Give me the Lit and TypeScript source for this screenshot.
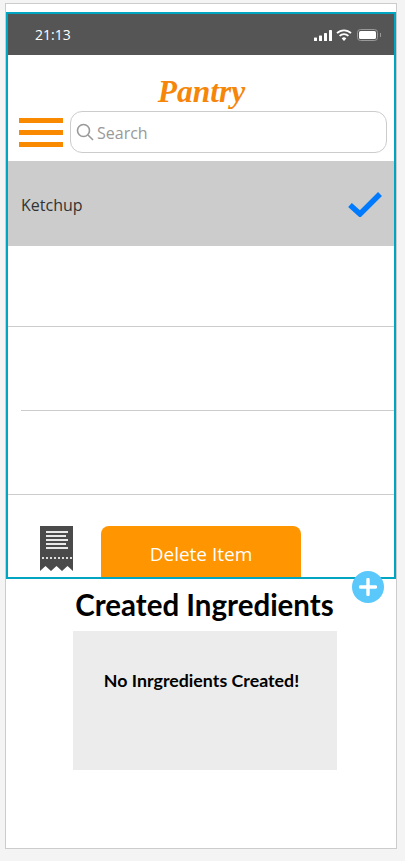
import { LitElement, html, css } from "lit";
import { customElement } from "lit/decorators.js";

@customElement("app-root")
export class AppRoot extends LitElement {
  static styles = css`
    :host { display: block; width: 405px; height: 861px; background: #f4f4f4; overflow: hidden; font-family: "Open Sans", sans-serif; }
    .page { padding: 3px 8px 0 5px; }
    .card { position: relative; height: 846px; box-sizing: border-box; background: #fff; border: 1px solid #ccc; padding-top: 8px; }
    .phone { box-sizing: border-box; height: 567px; border: 2px solid #00a5c2; display: flex; flex-direction: column; overflow: hidden; background: #fff; }
    .status { height: 41px; flex: none; background: #555; color: #fff; display: flex; align-items: center; justify-content: space-between; padding: 0 13px 0 27px; font-size: 14px; }
    .status-icons { display: flex; align-items: center; gap: 4px; padding-top: 1px; }
    .top { height: 106px; flex: none; display: flex; flex-direction: column; box-sizing: border-box; padding-top: 17px; }
    .title { text-align: center; font: italic bold 31.500px/40px "Liberation Serif", serif; color: #f5860a; height: 39px; padding-left: 1px; }
    .search-row { display: flex; align-items: center; padding: 0 7px 0 11px; gap: 7px; }
    .burger { width: 44px; height: 29px; display: flex; flex-direction: column; justify-content: space-between; flex: none; }
    .burger span { display: block; height: 5px; background: #f98a00; }
    .search { flex: 1; height: 42px; box-sizing: border-box; border: 1px solid #ccc; border-radius: 12px; display: flex; align-items: center; gap: 3px; padding-left: 5px; color: #999; font-size: 16px; }
    .search span { padding-top: 2px; }
    .row { box-sizing: border-box; flex: none; display: flex; align-items: center; justify-content: space-between; padding: 0 12px 0 13px; color: #333; font-size: 16px; }
    .selected { height: 85px; background: #ccc; }
    .selected span { padding-top: 2px; }
    .line { height: 81px; border-bottom: 1px solid #ccc; }
    .line2 { height: 84px; }
    .inset-line { margin-left: 13px; height: 84px; box-sizing: border-box; border-bottom: 1px solid #ccc; flex: none; }
    .actions { display: flex; align-items: flex-start; padding: 31px 0 0 32px; gap: 28px; flex: none; }
    .receipt { display: block; flex: none; }
    .delete { width: 200px; height: 60px; background: #ff9500; border-radius: 8px; color: #fff; font-size: 19px; display: flex; justify-content: center; padding-top: 15px; box-sizing: border-box; }
    .badge { position: absolute; left: 346px; top: 567px; width: 32px; height: 32px; border-radius: 50%; background: #5ac8fa; display: flex; align-items: center; justify-content: center; }
    .ingredients { display: flex; flex-direction: column; align-items: center; padding-left: 8px; }
    h2 { margin: 0 1px 0 0; height: 52px; font: bold 29.500px/51px "Lato", sans-serif; color: #000; text-align: center; }
    .empty { width: 264px; height: 139px; background: #ececec; box-sizing: border-box; padding: 38px 7px 0 0; text-align: center; font: bold 17.800px/22px "Lato", sans-serif; color: #000; }
  `;

  render() {
    return html`<div class="page"><div class="card">
      <div class="phone">
        <div class="status">
          <span>21:13</span>
          <span class="status-icons">
            <svg width="18" height="11" viewBox="0 0 18 11"><g fill="#fff"><rect x="0" y="7.500" width="3" height="3.500" rx=".6"/><rect x="5" y="5.500" width="3" height="5.500" rx=".6"/><rect x="10" y="3" width="3" height="8" rx=".6"/><rect x="15" y="0" width="3" height="11" rx=".6"/></g></svg>
            <svg width="16" height="12" viewBox="0 0 16 12"><g fill="none" stroke="#fff" stroke-width="1.8"><path d="M1 4.200a10 10 0 0 1 14 0"/><path d="M3.600 6.900a6.200 6.200 0 0 1 8.800 0"/></g><path d="M8 12 5.700 9.400a3.200 3.200 0 0 1 4.600 0z" fill="#fff"/></svg>
            <svg width="24" height="12" viewBox="0 0 24 12" style="margin-left:1px"><rect x=".5" y=".5" width="20" height="11" rx="3" fill="none" stroke="#999"/><rect x="2" y="2" width="17" height="8" rx="1.600" fill="#fff"/><rect x="23" y="4" width="1" height="4" fill="#999"/></svg>
          </span>
        </div>
        <div class="top">
          <div class="title">Pantry</div>
          <div class="search-row">
            <div class="burger"><span></span><span></span><span></span></div>
            <div class="search">
              <svg width="18" height="18" viewBox="0 0 18 18" fill="none" stroke="#999" stroke-width="1.6"><circle cx="7.500" cy="7.500" r="6"/><path d="M12 12l5 5"/></svg>
              <span>Search</span>
            </div>
          </div>
        </div>
        <div class="row selected">
          <span>Ketchup</span>
          <svg width="34" height="26" viewBox="0 0 34 26" fill="none" stroke="#007aff" stroke-width="5.500"><path d="M2 14l10 9L32 3"/></svg>
        </div>
        <div class="row line"></div>
        <div class="inset-line"></div>
        <div class="row line line2"></div>
        <div class="actions">
          <svg class="receipt" width="33" height="45" viewBox="0 0 33 45">
            <path d="M0 0h33v45l-5.500-5-5.500 5-5.500-5-5.500 5-5.500-5L0 45z" fill="#4a4a4a"/>
            <g fill="#e8e8e8"><rect x="6" y="5" width="22" height="2"/><rect x="6" y="9" width="20" height="2"/><rect x="6" y="13" width="22" height="2"/><rect x="6" y="17" width="20" height="2"/><rect x="6" y="21" width="22" height="2"/></g>
            <g fill="#ddd"><rect x="2" y="31" width="2" height="2"/><rect x="6" y="31" width="2" height="2"/><rect x="10" y="31" width="2" height="2"/><rect x="14" y="31" width="2" height="2"/><rect x="18" y="31" width="2" height="2"/><rect x="22" y="31" width="2" height="2"/><rect x="26" y="31" width="2" height="2"/><rect x="30" y="31" width="2" height="2"/></g>
          </svg>
          <div class="delete">Delete Item</div>
        </div>
      </div>
      <div class="ingredients">
        <h2>Created Ingredients</h2>
        <div class="empty">No Inrgredients Created!</div>
      </div>
      <div class="badge"><svg width="18" height="18" viewBox="0 0 18 18"><path d="M9 1.500v15M1.500 9h15" stroke="#fff" stroke-width="3.400" stroke-linecap="round"/></svg></div>
    </div></div>`;
  }
}
